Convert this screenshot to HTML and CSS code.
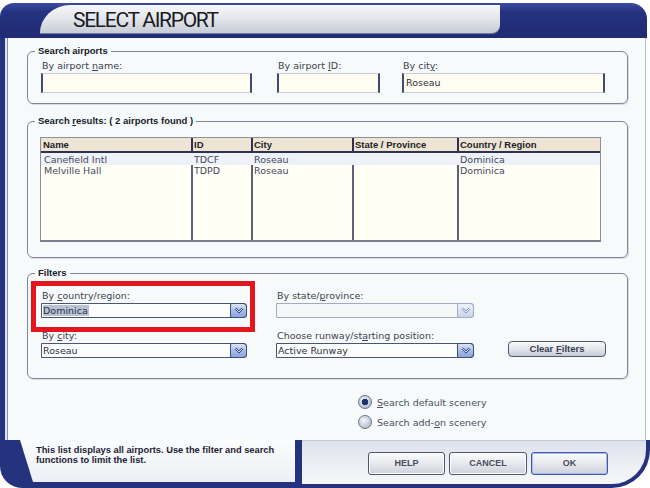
FILE: index.html
```html
<!DOCTYPE html>
<html>
<head>
<meta charset="utf-8">
<title>Select Airport</title>
<link rel="stylesheet" href="styles.css">
</head>
<body>
<div class="window">
  <header class="titlebar">
    <div class="title-tab"><h1 class="title">SELECT AIRPORT</h1></div>
  </header>
  <main class="panel">
    <fieldset class="group group-search">
      <legend>Search airports</legend>
      <div class="search-row">
        <div class="field f-name"><span class="lbl">By airport <u>n</u>ame:</span><span class="input"></span></div>
        <div class="field f-id"><span class="lbl">By airport <u>I</u>D:</span><span class="input"></span></div>
        <div class="field f-city"><span class="lbl">By cit<u>y</u>:</span><span class="input">Roseau</span></div>
      </div>
    </fieldset>

    <fieldset class="group group-results">
      <legend>Search <u>r</u>esults: ( 2 airports found )</legend>
      <div class="table">
        <div class="row thead">
          <div class="cell">Name</div><div class="cell">ID</div><div class="cell">City</div><div class="cell">State / Province</div><div class="cell">Country / Region</div>
        </div>
        <div class="tbody">
          <div class="row sel">
            <div class="cell">Canefield Intl</div><div class="cell">TDCF</div><div class="cell">Roseau</div><div class="cell"></div><div class="cell">Dominica</div>
          </div>
          <div class="row">
            <div class="cell">Melville Hall</div><div class="cell">TDPD</div><div class="cell">Roseau</div><div class="cell"></div><div class="cell">Dominica</div>
          </div>
          <div class="row filler">
            <div class="cell"></div><div class="cell"></div><div class="cell"></div><div class="cell"></div><div class="cell"></div>
          </div>
        </div>
      </div>
    </fieldset>

    <fieldset class="group group-filters">
      <legend>Filters</legend>
      <div class="filter-grid">
        <div class="field highlight">
          <span class="lbl">By <u>c</u>ountry/region:</span>
          <div class="select"><span class="val"><span class="hl">Dominica</span></span><span class="arrow"><svg width="10" height="7" viewBox="0 0 10 7"><path d="M1.5 1.5 L5 5 L8.5 1.5" fill="none" stroke="#2b4590" stroke-width="2.2"/><path d="M1.5 1.5 L5 5 L8.5 1.5" fill="none" stroke="#eef3ff" stroke-width="0.9"/></svg></span></div>
        </div>
        <div class="field">
          <span class="lbl">By state/<u>p</u>rovince:</span>
          <div class="select disabled"><span class="val"></span><span class="arrow"><svg width="10" height="7" viewBox="0 0 10 7"><path d="M1.5 1.5 L5 5 L8.5 1.5" fill="none" stroke="#8a9cc4" stroke-width="2.2"/><path d="M1.5 1.5 L5 5 L8.5 1.5" fill="none" stroke="#f2f5fb" stroke-width="0.9"/></svg></span></div>
        </div>
        <div class="spacer"></div>
        <div class="field">
          <span class="lbl">By <u>c</u>ity:</span>
          <div class="select"><span class="val">Roseau</span><span class="arrow"><svg width="10" height="7" viewBox="0 0 10 7"><path d="M1.5 1.5 L5 5 L8.5 1.5" fill="none" stroke="#2b4590" stroke-width="2.2"/><path d="M1.5 1.5 L5 5 L8.5 1.5" fill="none" stroke="#eef3ff" stroke-width="0.9"/></svg></span></div>
        </div>
        <div class="field">
          <span class="lbl">Choose runway/st<u>a</u>rting position:</span>
          <div class="select"><span class="val">Active Runway</span><span class="arrow"><svg width="10" height="7" viewBox="0 0 10 7"><path d="M1.5 1.5 L5 5 L8.5 1.5" fill="none" stroke="#2b4590" stroke-width="2.2"/><path d="M1.5 1.5 L5 5 L8.5 1.5" fill="none" stroke="#eef3ff" stroke-width="0.9"/></svg></span></div>
        </div>
        <button class="btn-clear" type="button">Clear <u>F</u>ilters</button>
      </div>
    </fieldset>

    <div class="radios">
      <div class="radio-row"><span class="radio on"></span><span><u>S</u>earch default scenery</span></div>
      <div class="radio-row"><span class="radio"></span><span>Search add-<u>o</u>n scenery</span></div>
    </div>
  </main>
  <footer class="footer">
    <div class="hint-wrap">
      <p class="hint">This list displays all airports. Use the filter and search functions to limit the list.</p>
    </div>
    <div class="actions">
      <button class="btn" type="button">HELP</button>
      <button class="btn btn-wide" type="button">CANCEL</button>
      <button class="btn btn-ok" type="button">OK</button>
    </div>
  </footer>
</div>
</body>
</html>
```
FILE: styles.css
```css
*, *::before, *::after { box-sizing: border-box; }
html, body { margin: 0; padding: 0; background: #ffffff; }
body {
  font-family: "DejaVu Sans", Verdana, sans-serif;
  font-size: 9.5px;
  color: #3b3f4d;
}
u { text-decoration: underline; text-underline-offset: 1px; }

.window {
  width: 650px;
  height: 488px;
  display: flex;
  flex-direction: column;
}

/* title */
.titlebar {
  height: 35px;
  margin-top: 3px;
  margin-right: 3px;
  background: linear-gradient(#3b4ca3, #25327f 25%, #1f2b72);
  border-radius: 14px 16px 0 0;
  display: flex;
  flex-shrink: 0;
}
.title-tab {
  margin: 2px 0 0 40px;
  width: 460px;
  height: 28px;
  background: linear-gradient(#f6f7f9, #e4e7ec 45%, #c7ccd6);
  border-radius: 30px 0 8px 0 / 28px 0 8px 0;
  padding: 2px 0 0 33px;
  box-shadow: 0 1px 0 #6f7aa0;
}
.title {
  margin: 0;
  font: 400 21px/26px Roboto, "Liberation Sans", sans-serif;
  letter-spacing: -1.3px;
  color: #1a1b1f;
}

/* main panel */
.panel {
  height: 402px;
  flex-shrink: 0;
  margin-right: 4px;
  background: #f7fafa;
  border-left: 5px solid #25337f;
  border-right: 1px solid #b9bdc9;
  box-shadow: inset 2px 0 0 #dce4f3, inset 3px 0 0 #8a90a6;
  display: flex;
  flex-direction: column;
}

.group {
  margin: 0 17px 0 22px;
  border: 1px solid #80859a;
  border-radius: 6px;
  min-width: 0;
  box-shadow: 1px 1px 0 #d9dce3;
}
.group legend {
  margin-left: -6px;
  padding: 0 3px;
  font: bold 9.5px/12px "Liberation Sans", Arial, sans-serif;
  color: #161b2b;
}
.group-search { margin-top: 7px; padding: 3px 13px 10px; }
.group-results { margin-top: 11px; padding: 10px 13px 15px 12px; }
.group-results legend { margin-left: -5px; }
.group-filters { margin-top: 9px; padding: 11px 13px 20px; }

.lbl {
  display: block;
  line-height: 11px;
  padding-left: 1px;
  white-space: nowrap;
}

/* search inputs */
.search-row { display: flex; }
.f-name { width: 211px; }
.f-id { width: 103px; margin-left: 25px; }
.f-city { width: 203px; margin-left: 22px; }
.input {
  display: block;
  margin-top: 2px;
  height: 20px;
  background: #fffdf1;
  border: 1px solid #c9ccd5;
  border-left: 2px solid #414a6a;
  border-right: 2px solid #414a6a;
  padding: 0 2px;
  line-height: 18px;
  color: #2c2f3a;
}

/* table */
.table {
  width: 561px;
  height: 105px;
  border: 1px solid #8c8e9c;
  border-bottom: 2px solid #7c7e8e;
  background: #fffff6;
  display: flex;
  flex-direction: column;
}
.row {
  display: grid;
  grid-template-columns: 150px 60px 101px 105px 1fr;
}
.thead {
  height: 15px;
  background: #eee4d4;
  border-bottom: 2px solid #2d3250;
  font: bold 9.5px/13px "Liberation Sans", Arial, sans-serif;
  color: #1b1e2a;
}
.thead .cell { padding-left: 2px; }
.thead .cell + .cell { border-left: 2px solid #2d3250; padding-left: 1px; }
.tbody { flex: 1; display: flex; flex-direction: column; }
.tbody .row { height: 11px; line-height: 11px; color: #454a5e; }
.tbody .cell { padding-left: 3px; white-space: nowrap; overflow: hidden; }
.tbody .cell + .cell { border-left: 2px solid #5f6276; padding-left: 1px; }
.tbody .row.sel { height: 12px; padding-top: 1px; background: #eef1f7; }
.tbody .row.sel .cell + .cell { border-left-color: transparent; }
.tbody .row.filler { flex: 1; }

/* filters */
.filter-grid {
  display: grid;
  grid-template-columns: 206px 198px 98px;
  column-gap: 29px;
  row-gap: 12px;
}
.filter-grid .lbl { margin-bottom: 2px; }
.field { position: relative; }
.select {
  display: flex;
  height: 15px;
  border: 1px solid #4b5472;
  border-radius: 0 3px 3px 0;
  background: #fcfdfd;
}
.select .val {
  flex: 1;
  line-height: 13px;
  padding-left: 1px;
  color: #2c303c;
}
.select .hl { background: #b8c2d7; padding-right: 1px; }
.select .arrow {
  width: 17px;
  margin: -1px -1px -1px 0;
  border: 1px solid #3e4f85;
  border-radius: 2px 4px 4px 2px;
  background: linear-gradient(#dbe5f7, #a6bae2 55%, #8ea6d8);
  display: flex;
  align-items: center;
  justify-content: center;
}
.select.disabled { border-color: #a4aabb; background: #f4f6f8; }
.select.disabled .arrow {
  border-color: #a0aed0;
  background: linear-gradient(#eef2f9, #c9d4ea);
}
.highlight::after {
  content: "";
  position: absolute;
  left: -10px;
  top: -9px;
  width: 224px;
  height: 51px;
  border: 5px solid #e3151d;
}
.btn-clear {
  align-self: end;
  margin: 0 0 1px 5px;
  width: 98px;
  height: 16px;
  padding: 0;
  border: 1px solid #4b5577;
  border-radius: 4px;
  background: linear-gradient(#f8f9fb, #e1e4ea 55%, #c4c9d4);
  box-shadow: inset 0 1px 0 #ffffff;
  font: bold 9.5px/14px "Liberation Sans", Arial, sans-serif;
  color: #3a3f51;
}

/* radios */
.radios {
  margin-top: 13px;
  padding-left: 353px;
}
.radio-row {
  height: 20px;
  display: flex;
  align-items: center;
  gap: 5px;
  color: #4a4e5c;
}
.radio {
  width: 14px;
  height: 14px;
  border-radius: 50%;
  border: 1px solid #66728d;
  background: radial-gradient(circle at 40% 35%, #f4f6f9, #b3bccc 80%);
}
.radio.on {
  background:
    radial-gradient(circle, #1d356f 0 3px, transparent 3.6px),
    radial-gradient(circle at 40% 35%, #f4f6f9, #b3bccc 80%);
}

/* footer */
.footer {
  height: 48px;
  flex-shrink: 0;
  display: flex;
  background: #25327e;
  border-radius: 0 0 38px 22px;
}
.hint-wrap {
  width: 302px;
  padding: 0 7px 6px 20px;
}
.hint {
  margin: 0;
  height: 42px;
  clip-path: polygon(0 0, 100% 0, 100% 100%, 13px 100%);
  background: linear-gradient(#fbfcfd, #eceff4);
  padding: 5px 0 0 16px;
  font: bold 9.3px/10px "Liberation Sans", Arial, sans-serif;
  color: #1d2132;
}
.actions {
  flex: 1;
  margin: 0 4px 4px 0;
  background: linear-gradient(#dde1ea, #eef0f5 60%, #f5f6f9);
  border-top: 1px solid #c4c8d2;
  border-radius: 0 0 34px 0;
  display: flex;
  align-items: flex-start;
  padding: 11px 0 0 66px;
  gap: 4px;
}
.btn {
  width: 77px;
  height: 23px;
  padding: 0;
  border: 1px solid #4d566e;
  border-radius: 3px;
  background: linear-gradient(#fbfbfc, #e7e9ed 50%, #cdd1da);
  box-shadow: inset 0 0 0 1px #ffffff;
  font: bold 9px/21px "Liberation Sans", Arial, sans-serif;
  color: #494e5c;
}
.btn-wide { width: 78px; }
.btn-ok {
  border-color: #3d5aac;
  box-shadow: inset 0 0 0 1px #a9bbe6;
}
```
